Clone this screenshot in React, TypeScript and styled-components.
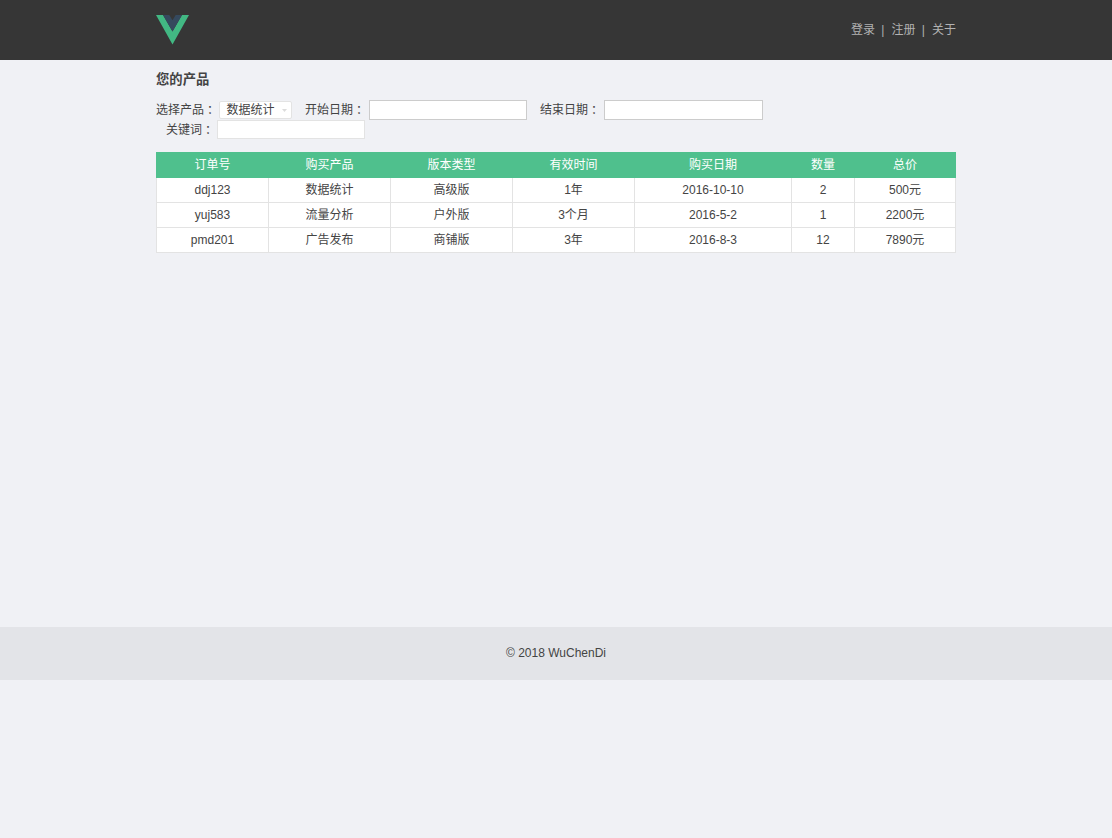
import React from 'react';
import styled, { createGlobalStyle } from 'styled-components';

const GlobalStyle = createGlobalStyle`
  * { box-sizing: border-box; }
  body {
    margin: 0;
    background: #f0f1f5;
    color: #444;
    font: 12px/18px "Liberation Sans", "Noto Sans CJK SC", sans-serif;
  }
`;

const Page = styled.div`
  display: flex;
  flex-direction: column;
  min-height: 838px;
`;

const Header = styled.header`
  height: 60px;
  background: #363636;
`;

const Container = styled.div`
  width: 800px;
  margin: 0 auto;
`;

const HeaderInner = styled(Container)`
  display: flex;
  justify-content: space-between;
  align-items: center;
  height: 60px;
`;

const Logo = styled.svg`
  display: block;
  width: 33px;
  height: 30px;
`;

const Nav = styled.nav`
  display: flex;
  color: #b2b2b2;
`;

const NavLink = styled.span`
  width: 25px;
  white-space: nowrap;
  text-align: right;
`;

const Divider = styled.span`
  width: 15.5px;
  text-align: center;
`;

const Main = styled.main`
  height: 567px;
  padding-top: 10px;
`;

const Title = styled.h2`
  margin: 0;
  font-size: 13.33px;
  font-weight: 700;
  line-height: 20px;
`;

const Filters = styled.div`
  padding-top: 10px;
  height: 62px;
`;

const FilterRow = styled.div<{ $indent?: number; $height: number }>`
  display: flex;
  align-items: center;
  height: ${(p) => p.$height}px;
  padding-left: ${(p) => p.$indent ?? 0}px;
`;

const Label = styled.label<{ $width: number }>`
  flex: none;
  width: ${(p) => p.$width}px;
  height: 18px;
  white-space: nowrap;
`;

const Colon = styled.span`
  font-family: "Noto Sans CJK TC", sans-serif;
  line-height: 1;
  vertical-align: -1px;
`;

const Select = styled.div`
  display: flex;
  align-items: center;
  justify-content: space-between;
  width: 73px;
  height: 18px;
  margin-right: 13px;
  padding: 0 4px 0 6.5px;
  border: 1px solid #e3e3e3;
  border-radius: 2px;
  background: #fff;
  line-height: 16px;
`;

const Arrow = styled.svg`
  display: block;
  width: 5px;
  height: 3px;
  fill: #dcdcdc;
`;

const DateInput = styled.input<{ $width: number }>`
  width: ${(p) => p.$width}px;
  height: 20px;
  margin: 0 13px 0 0;
  padding: 0 4px;
  border: 1px solid #ccc;
  background: #fff;
  font: inherit;
`;

const KeywordInput = styled.input`
  width: 148px;
  height: 19px;
  margin: 0;
  padding: 0 4px;
  border: 1px solid #e3e3e3;
  background: #fff;
  font: inherit;
`;

const Table = styled.div`
  text-align: center;
`;

const Row = styled.div`
  display: grid;
  grid-template-columns: 112px 122px 122px 122px 157px 63px 101px;
  border-left: 1px solid #e3e3e3;
  background: #fff;
`;

const HeadRow = styled(Row)`
  border-left-color: #4fc08d;
  background: #4fc08d;
  color: #fff;
`;

const HeadCell = styled.div`
  height: 26px;
  padding-right: 1px;
  line-height: 26px;
`;

const Cell = styled.div`
  height: 25px;
  border-right: 1px solid #e3e3e3;
  border-bottom: 1px solid #e3e3e3;
  line-height: 24px;
`;

const Footer = styled.footer`
  height: 53px;
  background: #e3e4e8;
  line-height: 52px;
  text-align: center;
`;

const columns = ['订单号', '购买产品', '版本类型', '有效时间', '购买日期', '数量', '总价'];

const orders = [
  ['ddj123', '数据统计', '高级版', '1年', '2016-10-10', '2', '500元'],
  ['yuj583', '流量分析', '户外版', '3个月', '2016-5-2', '1', '2200元'],
  ['pmd201', '广告发布', '商铺版', '3年', '2016-8-3', '12', '7890元'],
];

export default function App() {
  return (
    <Page>
      <GlobalStyle />
      <Header>
        <HeaderInner>
          <Logo viewBox="0 0 33 30" aria-label="Vue">
            <path fill="#42b883" d="M0 0h7l9.5 16.5L26 0h7L16.5 29.5z" />
            <path fill="#35495e" d="M7 0h6.3l3.2 5.3L19.7 0H26l-9.5 16.5z" />
          </Logo>
          <Nav>
            <NavLink>登录</NavLink>
            <Divider>|</Divider>
            <NavLink>注册</NavLink>
            <Divider>|</Divider>
            <NavLink>关于</NavLink>
          </Nav>
        </HeaderInner>
      </Header>
      <Main>
        <Container>
          <Title>您的产品</Title>
          <Filters>
            <FilterRow $height={20}>
              <Label $width={63}>选择产品<Colon>：</Colon></Label>
              <Select>
                数据统计
                <Arrow viewBox="0 0 5 3">
                  <path d="M0 0h5L2.5 3z" />
                </Arrow>
              </Select>
              <Label $width={64}>开始日期<Colon>：</Colon></Label>
              <DateInput $width={158} />
              <Label $width={64}>结束日期<Colon>：</Colon></Label>
              <DateInput $width={159} />
            </FilterRow>
            <FilterRow $height={19} $indent={10}>
              <Label $width={51}>关键词<Colon>：</Colon></Label>
              <KeywordInput />
            </FilterRow>
          </Filters>
          <Table>
            <HeadRow>
              {columns.map((name) => (
                <HeadCell key={name}>{name}</HeadCell>
              ))}
            </HeadRow>
            {orders.map((order) => (
              <Row key={order[0]}>
                {order.map((value, i) => (
                  <Cell key={i}>{value}</Cell>
                ))}
              </Row>
            ))}
          </Table>
        </Container>
      </Main>
      <Footer>© 2018 WuChenDi</Footer>
    </Page>
  );
}
